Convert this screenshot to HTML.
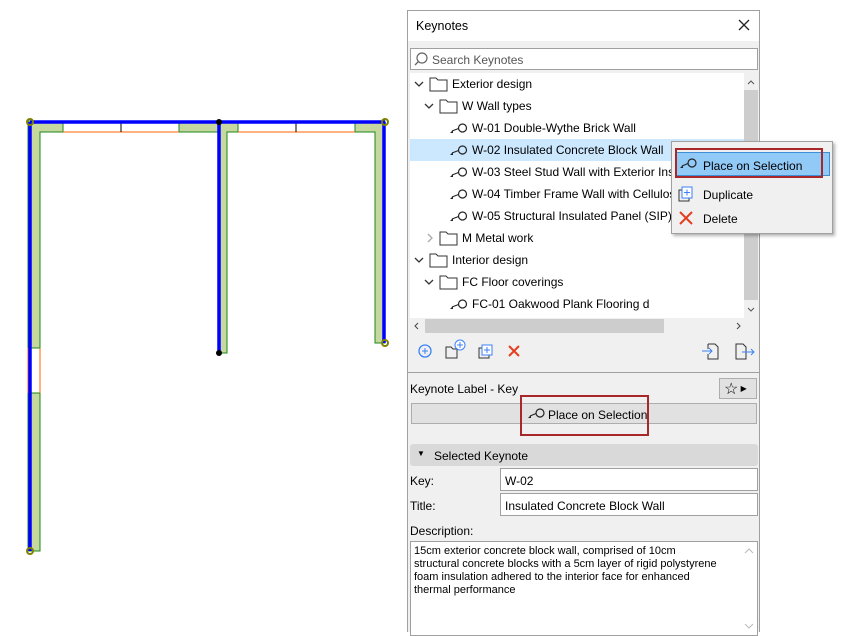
<!DOCTYPE html>
<html><head><meta charset="utf-8"><style>
body{margin:0;width:851px;height:632px;background:#fff;position:relative;overflow:hidden;font-family:"Liberation Sans",sans-serif;font-size:11.5px;color:#000}
.a{position:absolute}
.box{position:absolute;background:#fff;border:1px solid #a0a0a0;box-sizing:border-box}
</style></head><body>
<svg class="a" style="left:0;top:0" width="400" height="632">
<g fill="#c6d7a0" stroke="#1a8a1a" stroke-width="1">
<polygon points="28,121 63,121 63,132 40,132 40,348 28,348"/>
<rect x="28" y="393" width="12" height="158"/>
<polygon points="179,121 238,121 238,132 227,132 227,353 219,353 219,132 179,132"/>
<polygon points="355,121 385,121 385,343 375,343 375,132 355,132"/>
</g>
<g stroke="#ff6600" stroke-width="1" fill="none">
<line x1="63" y1="121" x2="179" y2="121"/><line x1="63" y1="132" x2="179" y2="132"/>
<line x1="238" y1="121" x2="355" y2="121"/><line x1="238" y1="132" x2="355" y2="132"/>
<line x1="28" y1="348" x2="28" y2="393"/><line x1="40" y1="348" x2="40" y2="393"/>
</g>
<g stroke="#000"><line x1="121" y1="122" x2="121" y2="132"/><line x1="296" y1="122" x2="296" y2="132"/></g>
<g stroke="#0000ff" stroke-width="3.5" fill="none">
<line x1="30" y1="122" x2="385" y2="122"/><line x1="30" y1="122" x2="30" y2="551"/>
<line x1="219" y1="122" x2="219" y2="353"/><line x1="384" y1="122" x2="384" y2="343"/>
</g>
<g fill="none" stroke="#808000" stroke-width="2"><circle cx="30" cy="122" r="3"/><circle cx="385" cy="122" r="3"/><circle cx="385" cy="343" r="3"/><circle cx="30" cy="551" r="3"/></g>
<circle cx="219" cy="122" r="3" fill="#000"/><circle cx="219" cy="353" r="3" fill="#000"/>
</svg>

<div class="a" style="left:407px;top:10px;width:353px;height:622px;background:#f0f0f0;border:1px solid #a0a0a0;border-bottom:none;box-sizing:border-box"></div>
<div class="a" style="left:408px;top:11px;width:351px;height:30px;background:#fff"></div>
<div class="a" style="left:416px;top:19px;font-size:12.5px">Keynotes</div>
<svg class="a" style="left:738px;top:19px" width="12" height="12"><path d="M1,1l10,10M11,1l-10,10" stroke="#222" stroke-width="1.3"/></svg>
<div class="box" style="left:410px;top:48px;width:348px;height:22px"></div>
<svg class="a" style="left:414px;top:51px" width="16" height="16"><circle cx="8" cy="7" r="5" fill="none" stroke="#666" stroke-width="1.2"/><line x1="4.5" y1="10.5" x2="1" y2="14" stroke="#666" stroke-width="1.3"/></svg>
<div class="a" style="left:432px;top:53px;color:#555;font-size:12px">Search Keynotes</div>
<div class="a" style="left:410px;top:73px;width:334px;height:245px;background:#fff"></div>
<div class="a" style="left:744px;top:73px;width:14px;height:245px;background:#f0f0f0"></div>
<div class="a" style="left:744px;top:90px;width:14px;height:210px;background:#cdcdcd"></div>
<svg class="a" style="left:746px;top:78px" width="10" height="240"><path d="M2,6l3,-3l3,3" fill="none" stroke="#555"/><path d="M2,230l3,3l3,-3" fill="none" stroke="#555"/></svg>
<div class="a" style="left:410px;top:139px;width:334px;height:22px;background:#cce8ff"></div>
<div class="a" style="left:410px;top:318px;width:348px;height:16px;background:#f0f0f0"></div>
<div class="a" style="left:425px;top:319px;width:239px;height:14px;background:#cdcdcd"></div>
<svg class="a" style="left:410px;top:318px" width="348" height="16"><path d="M8,5l-3,3l3,3" fill="none" stroke="#444"/><path d="M327,5l3,3l-3,3" fill="none" stroke="#444"/></svg>

<svg class="a" style="left:410px;top:73px" width="334" height="245" font-family="Liberation Sans" font-size="12">
<defs>
<g id="f"><path d="M0,2h6l2,2h9v11h-17z" fill="#fff" stroke="#333"/></g>
<g id="k"><circle cx="12.5" cy="0" r="4" fill="none" stroke="#222" stroke-width="1.2"/><line x1="8.5" y1="0.5" x2="2" y2="3" stroke="#222"/><path d="M0,5l3,-3v3z" fill="#222"/></g>
</defs>
<path d="M5,9l4,4l4,-4" fill="none" stroke="#333" stroke-width="1.3"/><use href="#f" x="20" y="3"/><text x="42" y="15">Exterior design</text>
<path d="M15,31l4,4l4,-4" fill="none" stroke="#333" stroke-width="1.3"/><use href="#f" x="30" y="25"/><text x="52" y="37">W Wall types</text>
<use href="#k" x="40" y="55"/><text x="62" y="59">W-01 Double-Wythe Brick Wall</text>
<use href="#k" x="40" y="77"/><text x="62" y="81">W-02 Insulated Concrete Block Wall</text>
<use href="#k" x="40" y="99"/><text x="62" y="103">W-03 Steel Stud Wall with Exterior Insulation</text>
<use href="#k" x="40" y="121"/><text x="62" y="125">W-04 Timber Frame Wall with Cellulose</text>
<use href="#k" x="40" y="143"/><text x="62" y="147">W-05 Structural Insulated Panel (SIP) Wall</text>
<path d="M18,161l4,4l-4,4" fill="none" stroke="#aaa" stroke-width="1.3"/><use href="#f" x="30" y="157"/><text x="52" y="169">M Metal work</text>
<path d="M5,185l4,4l4,-4" fill="none" stroke="#333" stroke-width="1.3"/><use href="#f" x="20" y="179"/><text x="42" y="191">Interior design</text>
<path d="M15,207l4,4l4,-4" fill="none" stroke="#333" stroke-width="1.3"/><use href="#f" x="30" y="201"/><text x="52" y="213">FC Floor coverings</text>
<use href="#k" x="40" y="231"/><text x="62" y="235">FC-01 Oakwood Plank Flooring d</text>
</svg>

<svg class="a" style="left:410px;top:338px" width="348" height="26">
<circle cx="15" cy="13" r="6" fill="none" stroke="#3b82f6" stroke-width="1.3"/><path d="M12,13h6M15,10v6" stroke="#3b82f6"/>
<path d="M36,9h5l2,2h4v9h-11z" fill="none" stroke="#333"/><circle cx="50" cy="7" r="5" fill="#fff" stroke="#3b82f6"/><path d="M47,7h6M50,4v6" stroke="#3b82f6"/>
<rect x="69" y="10" width="10" height="10" fill="none" stroke="#333"/><rect x="72" y="7" width="10" height="10" fill="#fff" stroke="#3b82f6"/><path d="M74,12h6M77,9v6" stroke="#3b82f6"/>
<path d="M99,8l10,10M109,8l-10,10" stroke="#e53e1f" stroke-width="2"/>
<path d="M298,6h7l3,3v12h-10v-5M298,11v-5" fill="none" stroke="#333"/><path d="M292,13h10M299,10l3,3l-3,3" fill="none" stroke="#3b82f6"/>
<path d="M326,6h7l3,3v12h-10z" fill="none" stroke="#333"/><path d="M332,14h12M341,11l3,3l-3,3" fill="none" stroke="#3b82f6"/>
</svg>
<div class="a" style="left:408px;top:372px;width:351px;height:1px;background:#a0a0a0"></div>
<div class="a" style="left:410px;top:382px;font-size:12px">Keynote Label - Key</div>
<div class="a" style="left:719px;top:378px;width:38px;height:21px;background:#e1e1e1;border:1px solid #adadad;box-sizing:border-box;font-size:16px;line-height:19px;padding-left:4px">☆<span style="font-size:8px;vertical-align:3px"> ▶</span></div>
<div class="a" style="left:411px;top:403px;width:346px;height:21px;background:#e1e1e1;border:1px solid #adadad;box-sizing:border-box"></div>
<svg class="a" style="left:527px;top:408px" width="20" height="12"><circle cx="13" cy="5" r="4" fill="none" stroke="#222" stroke-width="1.2"/><line x1="9" y1="5.5" x2="3" y2="8" stroke="#222"/><path d="M1,10l3,-3v3z" fill="#222"/></svg>
<div class="a" style="left:548px;top:408px;font-size:12px">Place on Selection</div>
<div class="a" style="left:520px;top:395px;width:129px;height:41px;border:2px solid #a8282a;box-sizing:border-box"></div>
<div class="a" style="left:410px;top:444px;width:348px;height:22px;background:#d9d9d9;border-radius:3px"></div>
<div class="a" style="left:417px;top:449px;font-size:8px">▼</div>
<div class="a" style="left:434px;top:449px;font-size:12px">Selected Keynote</div>
<div class="a" style="left:410px;top:474px;font-size:12px">Key:</div>
<div class="box" style="left:500px;top:468px;width:258px;height:23px;padding:5px 4px;font-size:12px">W-02</div>
<div class="a" style="left:410px;top:499px;font-size:12px">Title:</div>
<div class="box" style="left:500px;top:493px;width:258px;height:23px;padding:5px 4px;font-size:12px">Insulated Concrete Block Wall</div>
<div class="a" style="left:410px;top:524px;font-size:12px">Description:</div>
<div class="box" style="left:410px;top:541px;width:348px;height:95px;padding:3px 3px;line-height:13px;font-size:11px">15cm exterior concrete block wall, comprised of 10cm<br>structural concrete blocks with a 5cm layer of rigid polystyrene<br>foam insulation adhered to the interior face for enhanced<br>thermal performance</div>
<svg class="a" style="left:742px;top:544px" width="14" height="88"><path d="M3,9l4,-4l4,4" fill="none" stroke="#bbb"/><path d="M3,80l4,4l4,-4" fill="none" stroke="#bbb"/></svg>

<div class="a" style="left:671px;top:141px;width:162px;height:93px;background:#f0f0f0;border:1px solid #a0a0a0;box-sizing:border-box;box-shadow:2px 2px 3px rgba(0,0,0,.3)"></div>
<div class="a" style="left:676px;top:152px;width:154px;height:24px;background:#91c9f7;border:1px solid #3f8fd8;box-sizing:border-box"></div>
<div class="a" style="left:675px;top:148px;width:148px;height:30px;border:2px solid #a8282a;box-sizing:border-box"></div>
<svg class="a" style="left:679px;top:158px" width="20" height="12"><circle cx="13" cy="5" r="4" fill="none" stroke="#222" stroke-width="1.2"/><line x1="9" y1="5.5" x2="3" y2="8" stroke="#222"/><path d="M1,10l3,-3v3z" fill="#222"/></svg>
<div class="a" style="left:703px;top:159px;font-size:12px">Place on Selection</div>
<svg class="a" style="left:678px;top:186px" width="18" height="18"><rect x="1" y="4" width="10" height="11" fill="none" stroke="#333"/><rect x="4" y="1" width="10" height="11" fill="#fff" stroke="#3b82f6"/><path d="M6,6.5h6M9,3.5v6" stroke="#3b82f6"/></svg>
<div class="a" style="left:703px;top:188px;font-size:12px">Duplicate</div>
<svg class="a" style="left:678px;top:210px" width="16" height="16"><path d="M2,2l12,12M14,2l-12,12" stroke="#e53e1f" stroke-width="2"/></svg>
<div class="a" style="left:703px;top:212px;font-size:12px">Delete</div>
</body></html>
